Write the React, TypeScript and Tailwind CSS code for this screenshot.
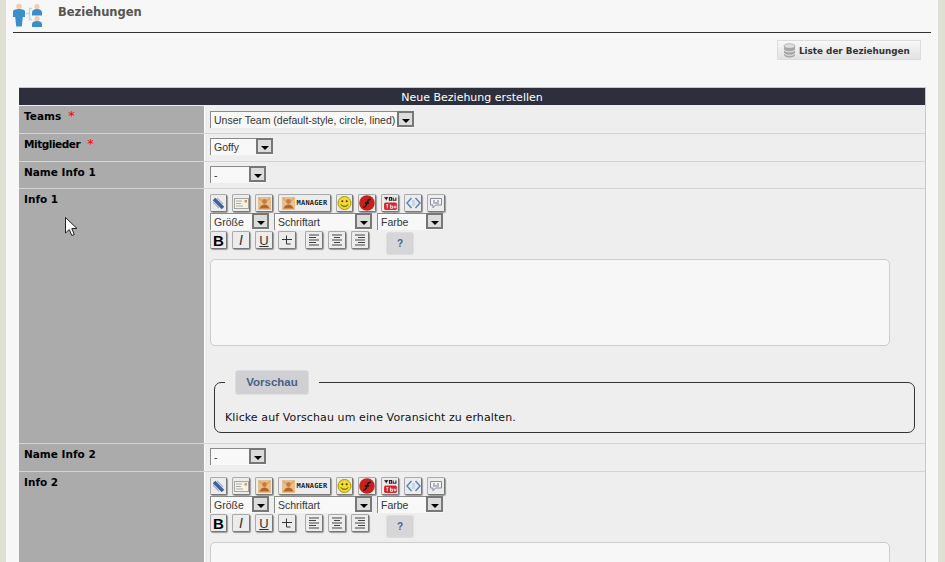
import React from "react";

const dv = "font-['DejaVu_Sans',sans-serif]";
const ls = "font-['Liberation_Sans',sans-serif]";

function Sel({ w, text, ml = "" }: { w: string; text: string; ml?: string }) {
  return (
    <div className={`${w} ${ml} h-[17px] flex border-t border-l border-[#8a8a8a] bg-[#f8f8f8] ${ls} text-[10.5px] text-[#333] shrink-0`}>
      <span className="flex-1 pl-[3px] leading-[16px] whitespace-nowrap overflow-hidden">{text}</span>
      <span className="w-[17px] h-[16px] -mt-px border-2 border-[#777] bg-[#dcdcdc] flex items-center justify-center shrink-0">
        <span className="mt-[3px] w-0 h-0 border-l-[4px] border-r-[4px] border-t-[4px] border-l-transparent border-r-transparent border-t-black" />
      </span>
    </div>
  );
}

function Btn({ w = "w-[18px]", children }: { w?: string; children: React.ReactNode }) {
  return (
    <span className={`${w} h-[18px] shrink-0 rounded-[2px] border border-[#aaa] border-r-[#777] border-b-[#777] bg-[#ececec] shadow-[1px_1px_1px_#999] flex items-center justify-center overflow-hidden`}>
      {children}
    </span>
  );
}

const Face = () => (
  <svg width="13" height="13" viewBox="0 0 13 13">
    <rect width="13" height="13" fill="#e6c08e" />
    <path d="M1 1l3 3M12 1L9 4M1 12l3-3M12 12L9 9" stroke="#d9a766" strokeWidth="1.500" />
    <circle cx="6.500" cy="4.500" r="2.400" fill="#c87b3a" />
    <path d="M2 11.500c.4-3 2.400-4 4.500-4s4.100 1 4.500 4z" fill="#b5652c" />
  </svg>
);

function Toolbar() {
  return (
    <div className="flex flex-col">
      <div className="flex h-[18px] gap-[5px] items-center">
        <Btn w="w-[17px]">
          <svg width="15" height="15" viewBox="0 0 15 15"><path d="M3 3l9 9" stroke="#3f6299" strokeWidth="3.500" /><path d="M2 6l6 6M6 2l6 6" stroke="#9db6d6" strokeWidth="1.300" /></svg>
        </Btn>
        <Btn>
          <svg width="15" height="11" viewBox="0 0 15 11"><rect x=".5" y=".5" width="14" height="10" fill="#f6f2e6" stroke="#a5a5a5" /><path d="M2 3h6M2 5.500h5M2 8h7" stroke="#aaa" /><rect x="10.500" y="2" width="2.500" height="2.500" fill="#c96" /></svg>
        </Btn>
        <Btn><Face /></Btn>
        <Btn w="w-[53px]">
          <span className="flex items-center gap-[2px]">
            <Face />
            <span className="text-[7px] font-bold font-['DejaVu_Sans_Mono',monospace] tracking-[0.2px] text-[#222] leading-none">MANAGER</span>
          </span>
        </Btn>
        <Btn w="w-[17px]">
          <svg width="16" height="16" viewBox="0 0 15 15"><circle cx="7.500" cy="7.500" r="6.500" fill="#f2dc28" stroke="#a89410" /><circle cx="5.300" cy="5.800" r="1" fill="#333" /><circle cx="9.700" cy="5.800" r="1" fill="#333" /><path d="M4 9c1 2.400 6 2.400 7 0" stroke="#333" fill="none" /></svg>
        </Btn>
        <Btn>
          <svg width="16" height="16" viewBox="0 0 15 15"><circle cx="7.500" cy="7.500" r="7.300" fill="#c8201c" /><path d="M4 11.500c3 0 3-3 3.700-5 .5-1.500 1.300-2.500 3.300-2.500M5.500 7.500h4" stroke="#111" strokeWidth="1.300" fill="none" /></svg>
        </Btn>
        <Btn>
          <svg width="15" height="15" viewBox="0 0 14 14">
            <path d="M3 1v3M1.500 1L3 3l1.500-2M6 1.500v2.500h2v-2.500zM9.500 1.500v2.500h2.500v-2.500" stroke="#222" fill="none" />
            <rect x="1" y="6" width="12" height="7" rx="1.500" fill="#d8232a" />
            <path d="M3 8h2M4 8v3.500M7 8v3.500h2v-2h-2M10.500 9v2h1.500V9" stroke="#fff" fill="none" strokeWidth=".8" />
          </svg>
        </Btn>
        <Btn>
          <svg width="15" height="12" viewBox="0 0 15 12"><path d="M6 6h3" stroke="#c5d6ec" strokeWidth="6" /><path d="M5.500 1L1 6l4.500 5M9.500 1l4.500 5-4.500 5" stroke="#5a84c0" strokeWidth="1.500" fill="none" /></svg>
        </Btn>
        <Btn>
          <svg width="14" height="12" viewBox="0 0 14 12"><path d="M1.500 1.500h11v6.500h-6L4 10.800V8H1.500z" fill="#f4f4f4" stroke="#889" /><path d="M4 4h2M8 4h2M4 6h6" stroke="#678" /></svg>
        </Btn>
      </div>
      <div className="flex gap-[5px] mt-px">
        <Sel w="w-[59px]" text="Größe" />
        <Sel w="w-[98px]" text="Schriftart" />
        <Sel w="w-[66px]" text="Farbe" />
      </div>
      <div className="flex items-start mt-px h-[26px]">
        <div className="flex gap-[5px]">
          <Btn w="w-[17px]"><span className={`${ls} font-bold text-[15px] leading-none text-black`}>B</span></Btn>
          <Btn><span className={`${ls} italic text-[14px] leading-none text-[#333]`}>I</span></Btn>
          <Btn><span className={`${ls} underline text-[13px] leading-none text-[#333]`}>U</span></Btn>
          <Btn><svg width="12" height="12" viewBox="0 0 12 12"><path d="M1 5.500h10M5.500 1.500v8.500h4" stroke="#333" strokeWidth="1" fill="none" /></svg></Btn>
        </div>
        <div className="flex gap-[5px] ml-[9px]">
          {["M2 2h10M2 4.500h7M2 7h10M2 9.500h7M2 12h10", "M2 2h10M4 4.500h6M2 7h10M4 9.500h6M2 12h10", "M2 2h10M5 4.500h7M2 7h10M5 9.500h7M2 12h10"].map((d) => (
            <Btn key={d}><svg width="14" height="14" viewBox="0 0 14 14"><path d={d} stroke="#444" strokeWidth="1" /></svg></Btn>
          ))}
        </div>
        <span className={`ml-[17px] mt-px w-[28px] h-[23px] rounded-[3px] bg-[#d6d6d9] border border-[#ddd] flex items-center justify-center ${ls} font-bold text-[10px] text-[#4a5f85]`}>?</span>
      </div>
    </div>
  );
}

function Row({ label, req, children, h, tight }: { label: string; req?: boolean; children: React.ReactNode; h: string; tight?: boolean }) {
  return (
    <div className={`flex ${h} border-b border-[#d4d4d4] shrink-0`}>
      <div className={`w-[186px] shrink-0 bg-[#ababab] pl-[5px] pt-[3px] ${dv} font-bold text-[10.5px] leading-[15px] text-black border-r border-white`}>
        <span className={tight ? "tracking-[-0.45px]" : ""}>{label}</span>
        {req && <span className="text-[#f00] ml-[7px] font-normal text-[13px] leading-none">*</span>}
      </div>
      <div className="flex-1 min-w-0 pl-[5px] bg-[#eeeeee]">{children}</div>
    </div>
  );
}

function Editor({ preview }: { preview: boolean }) {
  return (
    <div className="pt-[5px]">
      <Toolbar />
      <div className="w-[680px] h-[87px] mt-[2px] rounded-[5px] border border-[#ccc] bg-[#f7f7f7]" />
      {preview && (
        <fieldset className="w-[701px] h-[63px] ml-[4px] mt-[24px] border border-[#333] rounded-[7px] pl-[10px]">
          <legend className="px-[10px] h-[25px]">
            <span className={`block w-[74px] h-[25px] rounded-[3px] bg-[#d0d0d4] border border-[#ddd] text-center ${ls} font-bold text-[11.5px] leading-[23px] text-[#4a5f85]`}>Vorschau</span>
          </legend>
          <p className={`${dv} text-[11px] leading-[14px] tracking-[0.1px] text-[#111] mt-[16px]`}>Klicke auf Vorschau um eine Voransicht zu erhalten.</p>
        </fieldset>
      )}
    </div>
  );
}

export default function App() {
  return (
    <div className="relative w-[945px] h-[562px] overflow-hidden flex bg-[#f7f7f7]">
      <div className="w-[6px] shrink-0 bg-[#e0dfd3]" />
      <div className="flex-1 min-w-0 flex flex-col">
        <div className="ml-[7px] w-[918px] h-[33px] shrink-0 flex border-b border-[#333]">
          <svg width="32" height="28" viewBox="0 0 32 28" className="shrink-0 mt-[1px]" aria-hidden>
            <circle cx="6" cy="5.500" r="2.800" fill="#f0cdb0" />
            <path d="M0 10.500c0-1.500 2-2.500 6-2.500s6 1 6 2.500v5.500h-2.200l-1 9.500h-5.600l-1-9.500H0z" fill="#3a8fcb" />
            <path d="M13 12.500h3.500v-5h2.500M16.500 12.500v6h2.500" stroke="#bcd7ee" strokeWidth="1.500" fill="none" />
            <circle cx="24" cy="5.500" r="2.600" fill="#f0cdb0" />
            <path d="M19 14.500v-3c0-2 2-3.500 5-3.500s5 1.500 5 3.500v3z" fill="#3a8fcb" />
            <circle cx="24" cy="17.500" r="2.600" fill="#f0cdb0" />
            <path d="M19 26v-3c0-2 2-3 5-3s5 1 5 3v3z" fill="#3a8fcb" />
          </svg>
          <h1 className={`ml-[13px] mt-[5px] ${dv} font-bold text-[11.500px] leading-[15px] text-[#555]`}>Beziehungen</h1>
        </div>
        <div className="flex justify-end pr-[17px] mt-[7px] shrink-0">
          <div className={`w-[144px] h-[20px] border border-[#ddd] bg-gradient-to-b from-[#f8f8f8] to-[#e2e2e2] flex items-center pl-[5px] gap-[3px] ${dv} font-bold text-[8.8px] leading-[20px] text-[#333]`}>
            <svg width="13" height="15" viewBox="0 0 13 15" aria-hidden>
              <path d="M1 3v9c0 1.500 2.500 2.500 5.500 2.500S12 13.500 12 12V3z" fill="#a5a5a5" />
              <ellipse cx="6.500" cy="3" rx="5.500" ry="2.300" fill="#dedede" stroke="#999" strokeWidth=".6" />
              <path d="M1 6.500c0 1.500 2.500 2.300 5.500 2.300S12 8 12 6.500M1 10c0 1.500 2.500 2.300 5.500 2.300S12 11.500 12 10" stroke="#eee" fill="none" />
            </svg>
            <span className="pt-px">Liste der Beziehungen</span>
          </div>
        </div>
        <div className="ml-[13px] w-[907px] mt-[27px] flex flex-col border-t border-r border-[#c8c8c8] bg-[#eee]">
          <div className={`h-[17px] shrink-0 bg-[#2d303c] text-center ${dv} text-[11px] leading-[20px] text-white mb-px`}>Neue Beziehung erstellen</div>
          <Row label="Teams" req h="h-[28px]">
            <div className="pt-[5px]"><Sel w="w-[204px]" text="Unser Team (default-style, circle, lined)" /></div>
          </Row>
          <Row label="Mitglieder" req tight h="h-[28px]">
            <div className="pt-[4px]"><Sel w="w-[63px]" text="Goffy" /></div>
          </Row>
          <Row label="Name Info 1" h="h-[27px]">
            <div className="pt-[4px]"><Sel w="w-[56px]" text="-" /></div>
          </Row>
          <Row label="Info 1" h="h-[255px]">
            <Editor preview />
          </Row>
          <Row label="Name Info 2" h="h-[28px]">
            <div className="pt-[4px]"><Sel w="w-[56px]" text="-" /></div>
          </Row>
          <Row label="Info 2" h="h-[255px]">
            <Editor preview={false} />
          </Row>
        </div>
      </div>
      <div className="w-[7px] shrink-0 bg-[#e0dfd3]" />
      <svg width="14" height="20" viewBox="0 0 14 20" className="absolute left-[65px] top-[217px]" aria-hidden>
        <path d="M.5.500v15.500l3.800-3.500 2.500 6 2.500-1-2.500-6h5.200z" fill="#fff" stroke="#222" strokeWidth="1" />
      </svg>
    </div>
  );
}
